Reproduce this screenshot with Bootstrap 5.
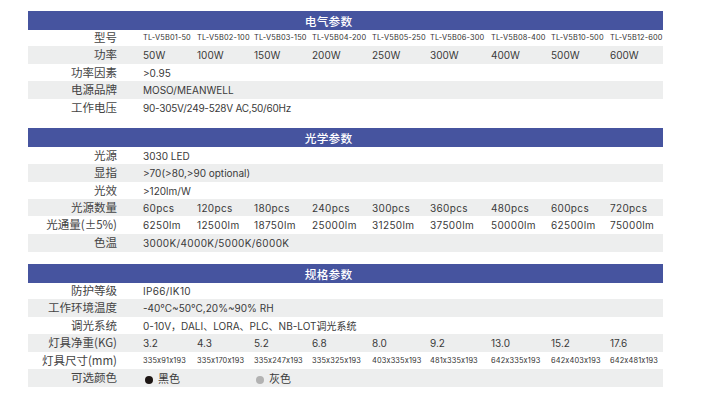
<!DOCTYPE html>
<html lang="zh">
<head>
<meta charset="utf-8">
<title>参数表</title>
<link href="https://cdn.jsdelivr.net/npm/bootstrap@5.3.0/dist/css/bootstrap.min.css" rel="stylesheet">
<style>
html,body{background:#fff;margin:0;height:403px;overflow:hidden}
.sheet{width:635px;margin-left:28px;padding-top:11px;font-family:"Inter","Noto Sans CJK SC",sans-serif;color:#3a3a3a}
.spec{table-layout:fixed;width:635px;margin:0;border-collapse:collapse;--bs-table-bg:transparent;--bs-table-color:#3a3a3a}
.spec th,.spec td{padding:0;border:0;vertical-align:middle;white-space:nowrap;overflow:visible;line-height:1;font-size:10px;font-weight:400;box-shadow:none}
.spec .ttl{height:19px;background:#46549f;color:#fff;text-align:center;padding-right:34px;font:500 11.7px "Noto Sans CJK SC",sans-serif;letter-spacing:.2px}
.spec .lbl{text-align:right;font-family:"Noto Sans CJK SC",sans-serif;font-size:11.5px;color:#444}
.spec tr.alt td{background:#edeeee}
.h16{height:16px}.h17{height:17px}.h18{height:18px}.h19{height:19px}
.spec td.tiny{font-size:7.4px;letter-spacing:.02em;color:#333}
.spec td.wide{letter-spacing:.035em}
.spec td.tight{letter-spacing:-.026em;padding-bottom:2px}
.spec td.raise{padding-bottom:2px}
.c0{width:89px}.c1{width:26px}.c2{width:54px}.c3{width:57px}.c4{width:58px}.c5{width:60px}.c6{width:58px}.c7{width:61px}.c8{width:60px}.c9{width:59px}.c10{width:53px}
.gap1{margin-bottom:10px}.gap2{margin-bottom:12px}
.swatch{display:inline-block;width:8px;height:8px;border-radius:50%;margin:0 5px 0 2px;vertical-align:-1px}
.sw-k{background:#1d1614}.sw-g{background:#b2b2b2}
.cn{font-family:"Noto Sans CJK SC",sans-serif;font-size:11px}
</style>
</head>
<body>
<div class="sheet">
<table class="table spec gap1">
<colgroup><col class="c0"><col class="c1"><col class="c2"><col class="c3"><col class="c4"><col class="c5"><col class="c6"><col class="c7"><col class="c8"><col class="c9"><col class="c10"></colgroup>
<tr><th colspan="11" class="ttl">电气参数</th></tr>
<tr class="h16"><td class="lbl">型号</td><td></td><td class="tiny">TL-V5B01-50</td><td class="tiny">TL-V5B02-100</td><td class="tiny">TL-V5B03-150</td><td class="tiny">TL-V5B04-200</td><td class="tiny">TL-V5B05-250</td><td class="tiny">TL-V5B06-300</td><td class="tiny">TL-V5B08-400</td><td class="tiny">TL-V5B10-500</td><td class="tiny">TL-V5B12-600</td></tr>
<tr class="h18 alt"><td class="lbl">功率</td><td></td><td>50W</td><td>100W</td><td>150W</td><td>200W</td><td>250W</td><td>300W</td><td>400W</td><td>500W</td><td>600W</td></tr>
<tr class="h17"><td class="lbl">功率因素</td><td></td><td colspan="9">&gt;0.95</td></tr>
<tr class="h18 alt"><td class="lbl">电源品牌</td><td></td><td colspan="9">MOSO/MEANWELL</td></tr>
<tr class="h19"><td class="lbl raise">工作电压</td><td></td><td colspan="9" class="tight">90-305V/249-528V AC,50/60Hz</td></tr>
</table>
<table class="table spec gap2">
<colgroup><col class="c0"><col class="c1"><col class="c2"><col class="c3"><col class="c4"><col class="c5"><col class="c6"><col class="c7"><col class="c8"><col class="c9"><col class="c10"></colgroup>
<tr><th colspan="11" class="ttl">光学参数</th></tr>
<tr class="h17"><td class="lbl">光源</td><td></td><td colspan="9">3030 LED</td></tr>
<tr class="h18 alt"><td class="lbl">显指</td><td></td><td colspan="9">&gt;70(&gt;80,&gt;90 optional)</td></tr>
<tr class="h17"><td class="lbl">光效</td><td></td><td colspan="9">&gt;120lm/W</td></tr>
<tr class="h17 alt"><td class="lbl">光源数量</td><td></td><td class="wide">60pcs</td><td class="wide">120pcs</td><td class="wide">180pcs</td><td class="wide">240pcs</td><td class="wide">300pcs</td><td class="wide">360pcs</td><td class="wide">480pcs</td><td class="wide">600pcs</td><td class="wide">720pcs</td></tr>
<tr class="h18"><td class="lbl">光通量(±5%)</td><td></td><td class="wide">6250lm</td><td class="wide">12500lm</td><td class="wide">18750lm</td><td class="wide">25000lm</td><td class="wide">31250lm</td><td class="wide">37500lm</td><td class="wide">50000lm</td><td class="wide">62500lm</td><td class="wide">75000lm</td></tr>
<tr class="h18 alt"><td class="lbl">色温</td><td></td><td colspan="9" class="wide">3000K/4000K/5000K/6000K</td></tr>
</table>
<table class="table spec">
<colgroup><col class="c0"><col class="c1"><col class="c2"><col class="c3"><col class="c4"><col class="c5"><col class="c6"><col class="c7"><col class="c8"><col class="c9"><col class="c10"></colgroup>
<tr><th colspan="11" class="ttl">规格参数</th></tr>
<tr class="h16"><td class="lbl">防护等级</td><td></td><td colspan="9" class="wide">IP66/IK10</td></tr>
<tr class="h18 alt"><td class="lbl">工作环境温度</td><td></td><td colspan="9">-40°C~50°C,20%~90% RH</td></tr>
<tr class="h17"><td class="lbl">调光系统</td><td></td><td colspan="9">0-10V，DALI、LORA、PLC、NB-LOT调光系统</td></tr>
<tr class="h18 alt"><td class="lbl">灯具净重(KG)</td><td></td><td>3.2</td><td>4.3</td><td>5.2</td><td>6.8</td><td>8.0</td><td>9.2</td><td>13.0</td><td>15.2</td><td>17.6</td></tr>
<tr class="h17"><td class="lbl">灯具尺寸(mm)</td><td></td><td class="tiny">335x91x193</td><td class="tiny">335x170x193</td><td class="tiny">335x247x193</td><td class="tiny">335x325x193</td><td class="tiny">403x335x193</td><td class="tiny">481x335x193</td><td class="tiny">642x335x193</td><td class="tiny">642x403x193</td><td class="tiny">642x481x193</td></tr>
<tr class="h18 alt"><td class="lbl">可选颜色</td><td></td><td colspan="2"><span class="swatch sw-k"></span><span class="cn">黑色</span></td><td colspan="7"><span class="swatch sw-g"></span><span class="cn">灰色</span></td></tr>
</table>
</div>
<script src="https://cdn.jsdelivr.net/npm/bootstrap@5.3.0/dist/js/bootstrap.bundle.min.js"></script>
</body>
</html>
